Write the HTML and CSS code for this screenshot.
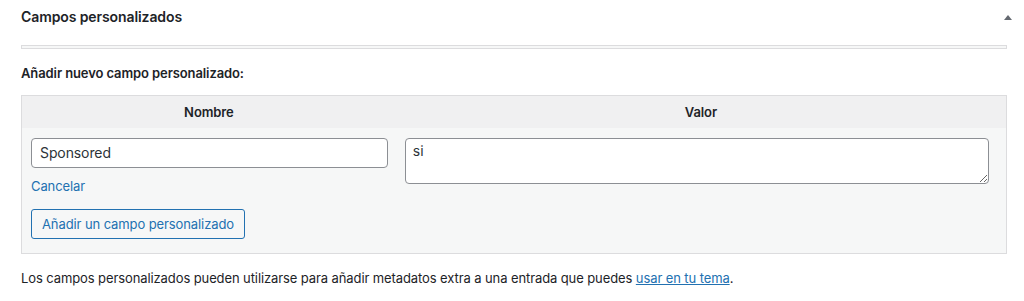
FILE: index.html
```html
<!DOCTYPE html>
<html lang="es">
<head>
    <meta charset="UTF-8">
    <meta name="viewport" content="width=device-width, initial-scale=1.0">
    <title>Campos personalizados</title>
    <link rel="stylesheet" href="styles.css">
</head>
<body>
    <div class="postbox">
        <div class="postbox-header">
            <h2 class="postbox-title">Campos personalizados</h2>
            <button class="toggle-btn" aria-label="Cerrar panel">
                <span class="toggle-arrow"></span>
            </button>
        </div>

        <div class="inside">
            <div class="list-table"></div>

            <p class="add-title">Añadir nuevo campo personalizado:</p>

            <table class="newmeta">
                <thead>
                    <tr>
                        <th class="col-name">Nombre</th>
                        <th class="col-value">Valor</th>
                    </tr>
                </thead>
                <tbody>
                    <tr>
                        <td class="cell-name">
                            <input type="text" class="meta-input" value="Sponsored">
                            <div class="cancel-row"><a href="#" class="link">Cancelar</a></div>
                            <button class="btn-add">Añadir un campo personalizado</button>
                        </td>
                        <td class="cell-value">
                            <textarea class="meta-textarea" rows="2">si</textarea>
                        </td>
                    </tr>
                </tbody>
            </table>

            <p class="note">Los campos personalizados pueden utilizarse para añadir metadatos extra a una entrada que puedes <a href="#" class="link underline">usar en tu tema</a>.</p>
        </div>
    </div>
</body>
</html>
```

FILE: styles.css
```css
* {
    margin: 0;
    padding: 0;
    box-sizing: border-box;
}

body {
    background: #fff;
    color: #1d2327;
    font-family: Inter, "Noto Sans", sans-serif;
    font-size: 13px;
    letter-spacing: -0.1px;
}

.postbox-header {
    height: 34px;
    display: flex;
    align-items: center;
    justify-content: space-between;
    padding: 0 10px 0 21px;
}

.postbox-title {
    font-size: 14px;
    font-weight: 600;
    line-height: 20px;
}

.toggle-btn {
    width: 12px;
    height: 12px;
    border: none;
    background: none;
    display: flex;
    align-items: center;
    justify-content: center;
}

.toggle-arrow {
    width: 0;
    height: 0;
    border-left: 4px solid transparent;
    border-right: 4px solid transparent;
    border-bottom: 5px solid #646970;
}

.inside {
    padding: 11px 17px 0 21px;
}

.list-table {
    height: 4px;
    border: 1px solid #dcdcde;
    background: #f6f7f7;
}

.add-title {
    font-weight: 600;
    line-height: 20px;
    margin: 14px 0 12px;
}

.newmeta {
    width: 100%;
    border-collapse: collapse;
    border: 1px solid #dcdcde;
    background: #f6f7f7;
}

.newmeta th {
    height: 32px;
    background: #f0f0f1;
    font-weight: 600;
    text-align: center;
    vertical-align: middle;
}

.col-name {
    width: 38%;
}

.newmeta td {
    vertical-align: top;
}

.cell-name {
    padding: 10px 8px 14px 9px;
}

.cell-value {
    padding: 10px 17px 14px 9px;
}

.meta-input {
    display: block;
    width: 100%;
    height: 30px;
    border: 1px solid #8c8f94;
    border-radius: 4px;
    padding: 0 8px;
    font-family: inherit;
    font-size: 14px;
    letter-spacing: -0.1px;
    color: #2c3338;
}

.meta-textarea {
    display: block;
    width: 100%;
    height: 46px;
    border: 1px solid #8c8f94;
    border-radius: 4px;
    padding: 2px 7px;
    font-family: inherit;
    font-size: 14px;
    line-height: 20px;
    color: #2c3338;
    resize: vertical;
}

.cancel-row {
    line-height: 20px;
    margin-top: 8px;
}

.link {
    color: #2271b1;
    text-decoration: none;
}

.underline {
    text-decoration: underline;
}

.btn-add {
    margin-top: 13px;
    height: 30px;
    padding: 0 10px;
    border: 1px solid #2271b1;
    border-radius: 3px;
    background: #f6f7f7;
    color: #2271b1;
    font-family: inherit;
    font-size: 13px;
    letter-spacing: -0.1px;
}

.note {
    line-height: 20px;
    margin-top: 14px;
}
```
